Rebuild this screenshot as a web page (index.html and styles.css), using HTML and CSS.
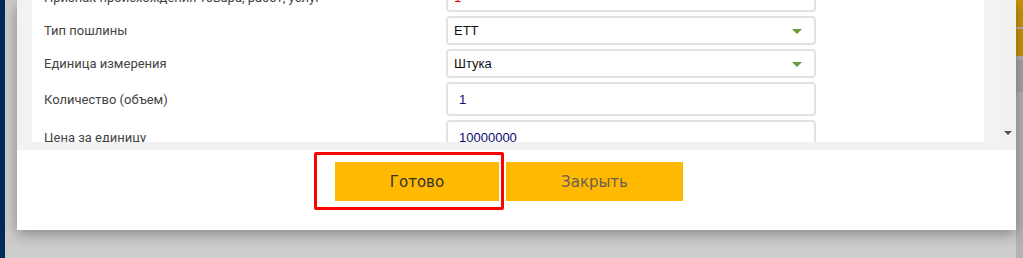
FILE: index.html
```html
<!DOCTYPE html>
<html lang="ru">
  <head>
    <meta charset="UTF-8" />
    <meta name="viewport" content="width=device-width, initial-scale=1.0" />
    <title>Товар</title>
    <link rel="stylesheet" href="styles.css">
  </head>
  <body>
    <div class="nav"></div>
    <div class="backdrop">
      <div class="modal">
        <div class="modal-body">
          <div class="panel">
            <form class="goods-form">
              <div class="form-row">
                <label>Признак происхождения товара, работ, услуг</label>
                <div class="field select red">1</div>
              </div>
              <div class="form-row">
                <label>Тип пошлины</label>
                <div class="field select">ЕТТ<span class="arrow"></span></div>
              </div>
              <div class="form-row">
                <label>Единица измерения</label>
                <div class="field select">Штука<span class="arrow"></span></div>
              </div>
              <div class="form-row">
                <label>Количество (объем)</label>
                <div class="field input">1</div>
              </div>
              <div class="form-row">
                <label>Цена за единицу</label>
                <div class="field input">10000000</div>
              </div>
            </form>
          </div>
          <div class="gutter"></div>
          <div class="scrollbar"><span class="scroll-down"></span></div>
        </div>
        <div class="modal-footer">
          <button class="btn btn-done" type="button">Готово</button>
          <button class="btn btn-close" type="button">Закрыть</button>
          <div class="highlight"></div>
        </div>
      </div>
      <div class="edge">
        <div class="edge-tab"></div>
        <div class="edge-tab"></div>
        <div class="edge-thumb"></div>
      </div>
    </div>
  </body>
</html>
```
FILE: styles.css
```css
html,
body {
  margin: 0;
  height: 258px;
  overflow: hidden;
}

body {
  display: flex;
  background-color: #cdcdcd;
  font-family: Roboto, "Liberation Sans", Arial, sans-serif;
}

.nav {
  width: 5px;
  background-color: #002a5a;
}

.backdrop {
  flex: 1;
  display: flex;
  align-items: flex-start;
  padding-left: 12px;
}

.modal {
  width: 999px;
  height: 230px;
  background-color: #fff;
  box-shadow: 0 4px 14px rgba(0, 0, 0, 0.35);
  position: relative;
  z-index: 1;
}

.modal-body {
  display: flex;
  height: 142px;
  padding-left: 15px;
  border-bottom: 8px solid #f2f2f2;
  background-color: #f2f2f2;
}

.panel {
  width: 952px;
  background-color: #fff;
  overflow: hidden;
}

.goods-form {
  margin-top: -17px;
  padding-left: 12px;
  display: flex;
  flex-direction: column;
  gap: 4px;
}

.form-row {
  display: flex;
  align-items: center;
}

.form-row label {
  width: 402px;
  font-size: 13px;
  color: #444;
  white-space: nowrap;
}

.field {
  box-sizing: border-box;
  width: 370px;
  border: 2px solid #e2e2e2;
  border-radius: 4px;
  font-family: "Liberation Sans", Arial, sans-serif;
  font-size: 13px;
  display: flex;
  align-items: center;
  position: relative;
}

.select {
  height: 29px;
  padding-left: 6px;
  color: #111;
}

.select.red {
  color: #d00;
}

.input {
  height: 34px;
  padding-left: 11px;
  color: #0a0a6e;
}

.arrow {
  position: absolute;
  right: 12px;
  top: 11px;
  width: 0;
  height: 0;
  border-left: 5px solid transparent;
  border-right: 5px solid transparent;
  border-top: 5px solid #6b9a3a;
}

.gutter {
  width: 16px;
}

.scrollbar {
  width: 16px;
  background-color: #f0f0f0;
  display: flex;
  align-items: flex-end;
  justify-content: center;
}

.scroll-down {
  margin-bottom: 7px;
  border-left: 4px solid transparent;
  border-right: 4px solid transparent;
  border-top: 4px solid #505050;
}

.modal-footer {
  display: flex;
  justify-content: center;
  gap: 7px;
  padding: 12px 15px 0 0;
  position: relative;
}

.btn {
  height: 39px;
  border: none;
  background-color: #ffb900;
  font-family: "DejaVu Sans", Verdana, sans-serif;
  font-size: 15px;
  cursor: pointer;
}

.btn-done {
  width: 164px;
  color: #3a3030;
}

.btn-close {
  width: 177px;
  color: #6a6058;
}

.highlight {
  position: absolute;
  left: 297px;
  top: 2px;
  width: 184px;
  height: 52px;
  border: 3px solid #f00;
  border-radius: 2px;
}

.edge {
  flex: 1;
  height: 258px;
  background-color: #b4b4b4;
}

.edge-tab {
  height: 27px;
  margin-bottom: 2px;
  background-color: #c8960a;
}

.edge-thumb {
  margin-top: 4px;
  height: 32px;
  background-color: #a6a6a6;
}
```
